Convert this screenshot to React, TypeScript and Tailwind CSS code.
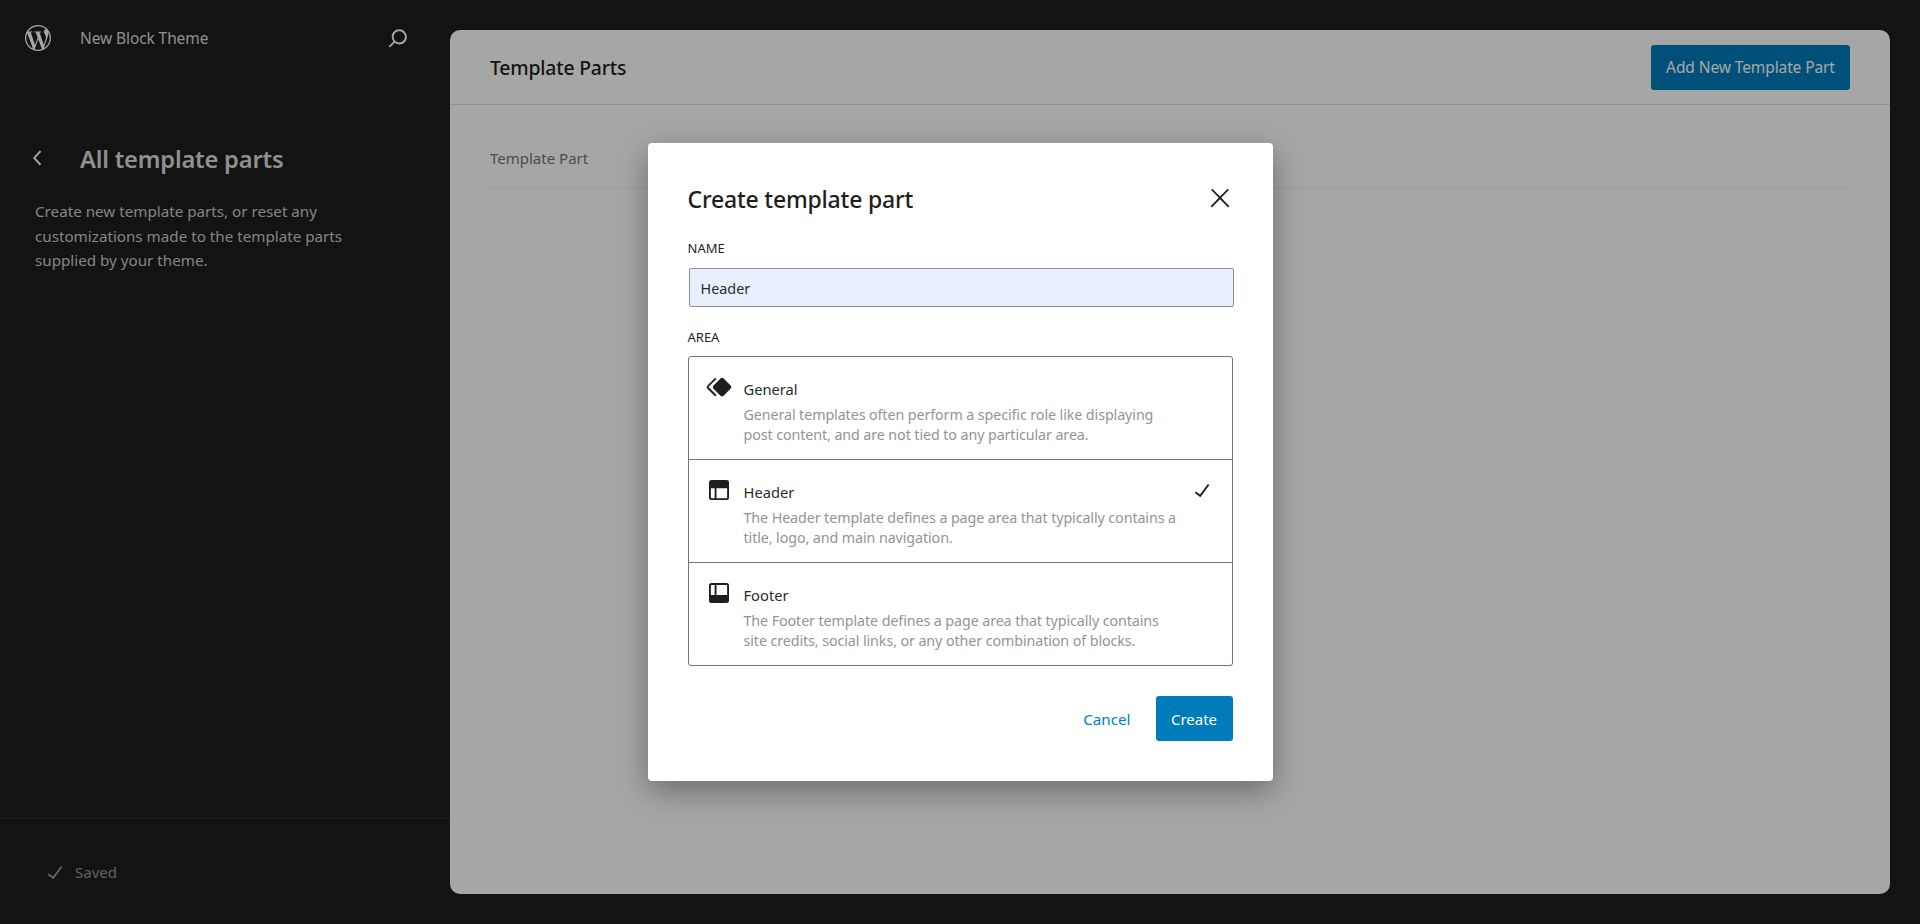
import { SiWordpress } from 'react-icons/si';

const areas = [
    {
        name: 'General',
        lines: ['General templates often perform a specific role like displaying', 'post content, and are not tied to any particular area.'],
        icon: 'M21.3 10.8l-5.6-5.6c-.7-.7-1.8-.7-2.5 0l-5.6 5.6c-.7.7-.7 1.8 0 2.5l5.6 5.6c.3.3.8.5 1.2.5s.9-.2 1.2-.5l5.6-5.6c.8-.7.8-1.9.1-2.5zm-17.6 1L10 5.5l-1-1-6.3 6.3c-.7.7-.7 1.8 0 2.5L9 19.5l1.1-1.1-6.3-6.3c-.2 0-.2-.2-.1-.3z',
    },
    {
        name: 'Header',
        lines: ['The Header template defines a page area that typically contains a', 'title, logo, and main navigation.'],
        icon: 'M18.5 10.5H10v8h8a.5.5 0 00.5-.5v-7.5zm-10 0h-3V18a.5.5 0 00.5.5h2.5v-8zM6 4h12a2 2 0 012 2v12a2 2 0 01-2 2H6a2 2 0 01-2-2V6a2 2 0 012-2z',
        selected: true,
    },
    {
        name: 'Footer',
        lines: ['The Footer template defines a page area that typically contains', 'site credits, social links, or any other combination of blocks.'],
        icon: 'M18 5.5h-8v8h8.5V6a.5.5 0 00-.5-.5zm-9.5 8h-3V6a.5.5 0 01.5-.5h2.5v8zM6 4h12a2 2 0 012 2v12a2 2 0 01-2 2H6a2 2 0 01-2-2V6a2 2 0 012-2z',
    },
];

function Icon({ d, className }: { d: string; className?: string }) {
    return (
        <svg viewBox="0 0 24 24" fill="currentColor" className={className}>
            <path fillRule="evenodd" d={d} />
        </svg>
    );
}

export default function App() {
    return (
        <div className="relative flex h-[924px] overflow-hidden bg-[#1e1e1e] font-['Noto_Sans',sans-serif]">
            {/* sidebar */}
            <aside className="flex w-[450px] shrink-0 flex-col">
                <div className="flex h-[76px] items-center pl-[25px] pr-[37px]">
                    <SiWordpress className="size-[26px] shrink-0 text-white" />
                    <span className="ml-[29px] pt-[1px] text-[15.5px] tracking-[-0.1px] text-[#dddddd]">New Block Theme</span>
                    <Icon
                        d="M13 5c-3.3 0-6 2.7-6 6 0 1.4.5 2.7 1.3 3.7l-3.8 3.8 1.1 1.1 3.8-3.8c1 .8 2.3 1.3 3.7 1.3 3.3 0 6-2.7 6-6S16.3 5 13 5zm0 10.5c-2.5 0-4.5-2-4.5-4.5s2-4.5 4.5-4.5 4.5 2 4.5 4.5-2 4.5-4.5 4.5z"
                        className="ml-auto size-[30px] text-white"
                    />
                </div>
                <div className="flex-1 pl-[35px] pr-[80px] pt-[62px]">
                    <div className="flex h-[40px] items-center">
                        <Icon d="M14.6 7l-1.2-1L8 12l5.4 6 1.2-1-4.6-5z" className="-ml-[12px] size-[30px] text-white" />
                        <h1 className="ml-[27px] mt-[3px] text-[23.7px] font-semibold tracking-[-0.2px] text-[#dddddd]">All template parts</h1>
                    </div>
                    <p className="mt-[21px] w-[350px] text-[15.2px] leading-[24.5px] text-[#cccccc]">
                        Create new template parts, or reset any customizations made to the template parts supplied by your theme.
                    </p>
                </div>
                <div className="flex h-[106px] items-center border-t border-[#2f2f2f] pl-[40px]">
                    <Icon d="M16.7 7.1l-6.3 8.5-3.3-2.5-.9 1.2 4.5 3.4L17.9 8z" className="size-[30px] text-[#999999]" />
                    <span className="ml-[5px] pt-[2px] text-[15px] text-[#999999]">Saved</span>
                </div>
            </aside>

            {/* main card */}
            <main className="flex flex-1 py-[30px] pr-[30px]">
                <div className="flex-1 rounded-[10px] bg-white">
                    <div className="flex h-[75px] items-center justify-between border-b border-[#e0e0e0] px-[40px]">
                        <h2 className="pt-[2px] text-[19.4px] font-medium tracking-[-0.2px] text-[#1e1e1e]">Template Parts</h2>
                        <button className="h-[45px] w-[199px] rounded-[3px] bg-[#007cba] pt-[2px] text-[15.5px] tracking-[-0.1px] text-white">
                            Add New Template Part
                        </button>
                    </div>
                    <div className="mx-[40px] flex h-[83px] items-center border-b border-[#f0f0f0] pt-[24px] text-[15px] text-[#757575]">
                        Template Part
                    </div>
                </div>
            </main>

            {/* modal */}
            <div className="absolute inset-0 flex items-center justify-center bg-black/35">
                <div className="h-[638px] w-[625px] rounded-[4px] bg-white px-[40px] pt-[35px] shadow-[0_10px_30px_rgba(0,0,0,0.35)]">
                    <div className="flex h-[40px] items-center justify-between">
                        <h3 className="pt-[2px] text-[23px] font-medium tracking-[-0.2px] text-[#1e1e1e]">Create template part</h3>
                        <Icon
                            d="M13 11.8l6.1-6.3-1-1-6.1 6.2-6.1-6.2-1 1 6.1 6.3-6.5 6.7 1 1 6.5-6.6 6.5 6.6 1-1z"
                            className="mr-[-2px] size-[30px] text-[#1e1e1e]"
                        />
                    </div>
                    <label className="mt-[20px] block text-[13px] leading-[20px] text-[#1e1e1e]">NAME</label>
                    <div className="ml-[1px] mt-[10px] flex h-[39px] w-[545px] items-center rounded-[2px] border border-[#8d8d8d] bg-[#e8f0fe] pl-[11px] pt-[2px] text-[14.4px] text-[#2b2b2b]">
                        Header
                    </div>
                    <label className="mt-[20px] block text-[13px] leading-[20px] text-[#1e1e1e]">AREA</label>
                    <div className="mt-[9px] w-[545px] rounded-[3px] border border-[#757575]">
                        {areas.map((area, i) => (
                            <div key={area.name} className={`flex px-[15px] pt-[15px] ${i > 0 ? 'h-[103px] border-t border-[#757575]' : 'h-[102px]'}`}>
                                <Icon d={area.icon} className="size-[30px] shrink-0 text-[#1e1e1e]" />
                                <div className="ml-[10px] flex-1">
                                    <div className="mb-[6px] mt-[7px] text-[14.7px] leading-[20px] text-[#2b2b2b]">{area.name}</div>
                                    {area.lines.map((line) => (
                                        <div key={line} className="whitespace-nowrap text-[14.3px] leading-[20px] tracking-[-0.1px] text-[#949494]">
                                            {line}
                                        </div>
                                    ))}
                                </div>
                                {area.selected && (
                                    <Icon d="M16.7 7.1l-6.3 8.5-3.3-2.5-.9 1.2 4.5 3.4L17.9 8z" className="size-[30px] shrink-0 text-[#1e1e1e]" />
                                )}
                            </div>
                        ))}
                    </div>
                    <div className="mt-[30px] flex items-center justify-end">
                        <button className="mr-[25px] pt-[2px] text-[15.2px] text-[#007cba]">Cancel</button>
                        <button className="h-[45px] w-[77px] rounded-[3px] bg-[#007cba] pt-[2px] text-[15px] text-white">Create</button>
                    </div>
                </div>
            </div>
        </div>
    );
}
